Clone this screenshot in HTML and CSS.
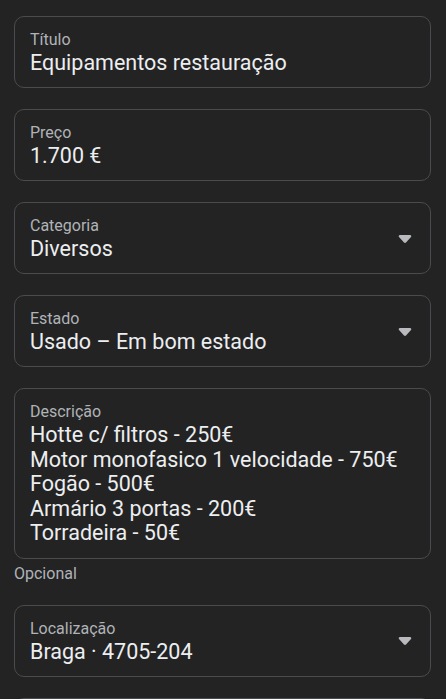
FILE: index.html
```html
<!DOCTYPE html>
<html lang="pt">
<head>
    <meta charset="UTF-8">
    <meta name="viewport" content="width=device-width, initial-scale=1.0">
    <title>Novo anúncio</title>
    <link rel="stylesheet" href="styles.css">
</head>
<body>
    <div class="form">
        <div class="field">
            <div class="field-body">
                <div class="field-label">Título</div>
                <div class="field-value">Equipamentos restauração</div>
            </div>
        </div>

        <div class="field">
            <div class="field-body">
                <div class="field-label">Preço</div>
                <div class="field-value">1.700 €</div>
            </div>
        </div>

        <div class="field">
            <div class="field-body">
                <div class="field-label">Categoria</div>
                <div class="field-value">Diversos</div>
            </div>
            <svg class="caret" width="14" height="10" viewBox="0 0 14 10"><path d="M2 1h10c1.2 0 1.7 1.2 1 2L8 8.6c-.5.6-1.5.6-2 0L1 3c-.7-.8-.2-2 1-2z"/></svg>
        </div>

        <div class="field">
            <div class="field-body">
                <div class="field-label">Estado</div>
                <div class="field-value">Usado – Em bom estado</div>
            </div>
            <svg class="caret" width="14" height="10" viewBox="0 0 14 10"><path d="M2 1h10c1.2 0 1.7 1.2 1 2L8 8.6c-.5.6-1.5.6-2 0L1 3c-.7-.8-.2-2 1-2z"/></svg>
        </div>

        <div class="field-group">
            <div class="field">
                <div class="field-body">
                    <div class="field-label">Descrição</div>
                    <div class="field-value multiline">Hotte c/ filtros - 250€
Motor monofasico 1 velocidade - 750€
Fogão - 500€
Armário 3 portas - 200€
Torradeira - 50€</div>
                </div>
            </div>
            <div class="field-hint">Opcional</div>
        </div>

        <div class="field">
            <div class="field-body">
                <div class="field-label">Localização</div>
                <div class="field-value">Braga · 4705-204</div>
            </div>
            <svg class="caret" width="14" height="10" viewBox="0 0 14 10"><path d="M2 1h10c1.2 0 1.7 1.2 1 2L8 8.6c-.5.6-1.5.6-2 0L1 3c-.7-.8-.2-2 1-2z"/></svg>
        </div>

        <div class="field">
            <div class="field-body">
                <div class="field-label">&nbsp;</div>
                <div class="field-value">&nbsp;</div>
            </div>
        </div>
    </div>
</body>
</html>
```

FILE: styles.css
```css
body {
    font-family: Roboto, "Noto Sans", sans-serif;
    background-color: #232323;
    color: #e4e6eb;
    margin: 0;
    padding: 0;
}

.form {
    display: flex;
    flex-direction: column;
    gap: 21px;
    padding: 16px 15px 40px 14px;
}

.field {
    display: flex;
    align-items: center;
    border: 1px solid #4a4b4d;
    border-radius: 10px;
    padding: 13px 18px 12px 15px;
    min-height: 72px;
    box-sizing: border-box;
}

.field-body {
    flex: 1;
    min-width: 0;
}

.field-label {
    font-size: 16px;
    line-height: 20px;
    color: #b0b3b8;
}

.field-value {
    margin-top: 1px;
    font-size: 21.5px;
    line-height: 24px;
    color: #eceef0;
}

.field-value.multiline {
    white-space: pre-line;
    line-height: 24.5px;
}

.field-hint {
    margin-top: 5px;
    font-size: 16px;
    line-height: 20px;
    color: #b0b3b8;
}

.caret {
    flex: none;
    fill: #b8babd;
}
```
